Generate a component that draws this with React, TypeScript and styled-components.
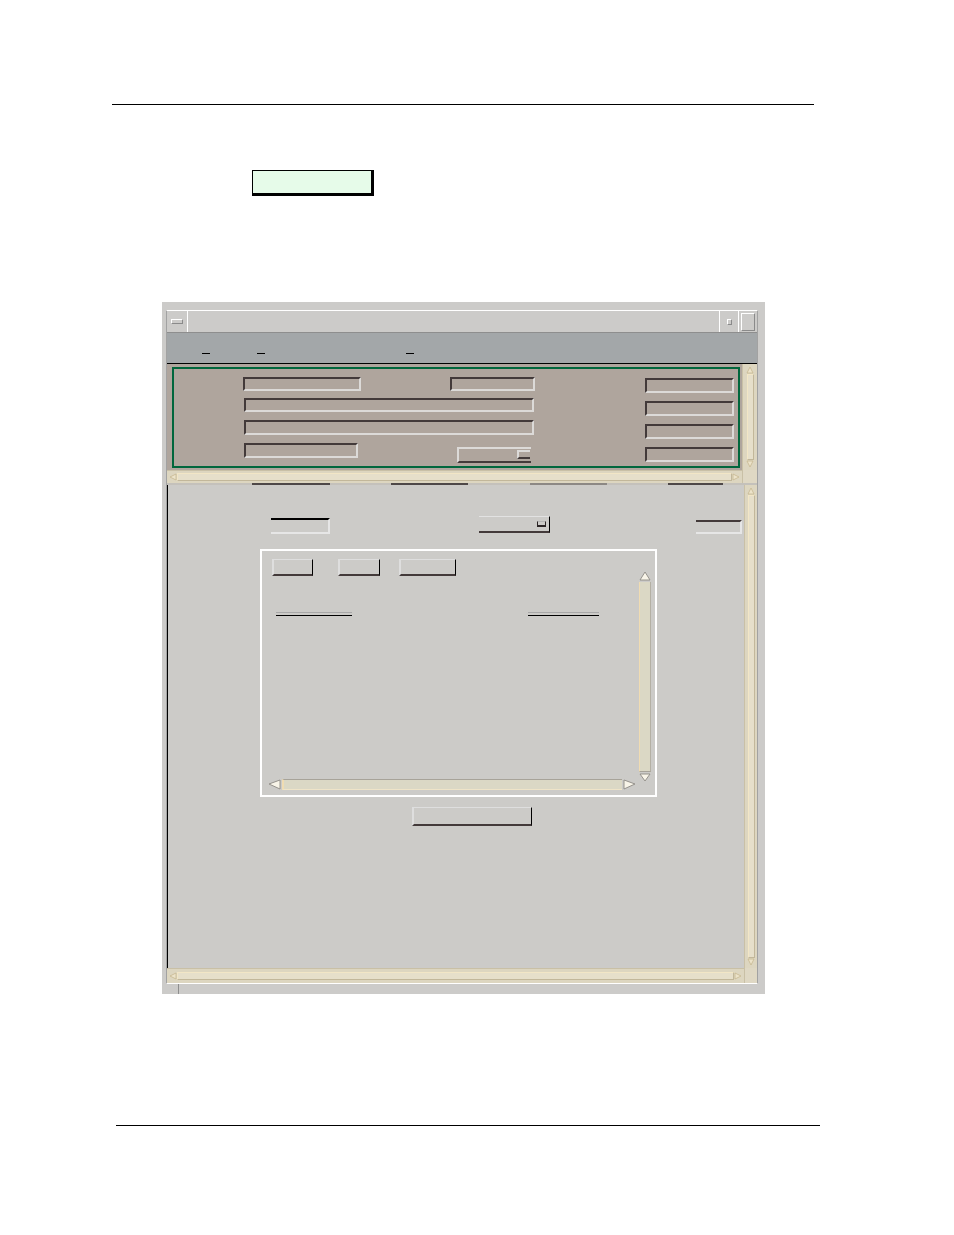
import React from 'react';
import styled, { createGlobalStyle } from 'styled-components';

const GlobalStyle = createGlobalStyle`
  html, body { margin: 0; padding: 0; background: #fff; }
  body { font-family: "Liberation Sans", Arial, sans-serif; }
  * { box-sizing: border-box; }
`;

const Page = styled.div`
  width: 954px;
  height: 1235px;
  background: #fff;
  display: flex;
  flex-direction: column;
  overflow: hidden;
`;

const Rule = styled.div<{ $top: number; $left: number; $width: number }>`
  flex-shrink: 0;
  margin-top: ${p => p.$top}px;
  margin-left: ${p => p.$left}px;
  width: ${p => p.$width}px;
  height: 1px;
  background: #000;
`;

const NoteBox = styled.div`
  flex-shrink: 0;
  margin-top: 65px;
  margin-left: 252px;
  width: 122px;
  height: 26px;
  background: #e6fbe9;
  border-top: 1px solid #000;
  border-left: 1px solid #000;
  border-right: 3px solid #000;
  border-bottom: 3px solid #000;
`;

/* ---------- window frame ---------- */

const Window = styled.div`
  flex-shrink: 0;
  margin-top: 106px;
  margin-left: 162px;
  width: 603px;
  height: 692px;
  background: #cccbc9;
  padding: 8px 7px 10px 4px;
  display: flex;
  flex-direction: column;
`;

const Shell = styled.div`
  flex: 1;
  display: flex;
  flex-direction: column;
  border-top: 1px solid #fff;
  border-left: 1px solid #a2a2a2;
  border-right: 1px solid #a2a2a2;
  border-bottom: 1px solid #fff;
`;

const FrameFoot = styled.div`
  height: 10px;
  margin-bottom: -10px;
  margin-left: 12px;
  width: 1px;
  background: #8e8e8e;
`;

const TitleBar = styled.div`
  height: 22px;
  display: flex;
  border-bottom: 1px solid #8e8e8e;
  background: #cccbc9;
`;

const TitleCell = styled.div<{ $w: number; $side: 'left' | 'right' }>`
  width: ${p => p.$w}px;
  display: flex;
  align-items: center;
  justify-content: center;
  ${p => (p.$side === 'left' ? 'border-right: 1px solid #fff;' : 'border-left: 1px solid #fff;')}
`;

const TitleSpacer = styled.div`
  flex: 1;
`;

const MinGlyph = styled.div`
  width: 12px;
  height: 5px;
  border-top: 1px solid #fff;
  border-left: 1px solid #fff;
  border-right: 1px solid #8a8a8a;
  border-bottom: 1px solid #8a8a8a;
`;

const IconGlyph = styled.div`
  width: 5px;
  height: 6px;
  margin-left: 1px;
  border: 1px solid #fff;
  border-right-color: #8a8a8a;
  border-bottom-color: #8a8a8a;
`;

const MaxGlyph = styled.div`
  width: 14px;
  height: 18px;
  border-top: 1px solid #fff;
  border-left: 1px solid #fff;
  border-right: 1px solid #8a8a8a;
  border-bottom: 1px solid #8a8a8a;
`;

const MenuBar = styled.div`
  height: 31px;
  background: #a3a7a9;
  border-bottom: 1px solid #000;
  display: flex;
  align-items: flex-start;
  padding-top: 20px;
`;

const Mnemonic = styled.span<{ $left: number }>`
  margin-left: ${p => p.$left}px;
  width: 8px;
  height: 1px;
  background: #000;
`;

/* ---------- scrollbars (motif beige) ---------- */

const VScroll = styled.div<{ $w: number }>`
  flex: 1;
  width: ${p => p.$w}px;
  display: flex;
  flex-direction: column;
  align-items: center;
  background: #ddd6c0;
  border-left: 1px solid #c9c0a6;
  padding: 2px 2px;
`;

const HScroll = styled.div<{ $h: number }>`
  height: ${p => p.$h}px;
  display: flex;
  align-items: center;
  background: #ddd6c0;
  border-top: 1px solid #c9c0a6;
  padding: 2px 2px;
`;

const TroughV = styled.div`
  flex: 1;
  width: 7px;
  background: #e6dfca;
  border: 1px solid #f2e6c6;
  border-right-color: #c2b79a;
  border-bottom-color: #c2b79a;
`;

const TroughH = styled.div`
  flex: 1;
  height: 8px;
  background: #e6dfca;
  border: 1px solid #f2e6c6;
  border-right-color: #c2b79a;
  border-bottom-color: #c2b79a;
`;

const Corner = styled.div<{ $h: number }>`
  height: ${p => p.$h}px;
  background: #dfd8c4;
  border-left: 1px solid #c9c0a6;
`;

type Dir = 'up' | 'down' | 'left' | 'right';

const triangle: Record<Dir, string> = {
  up: '4,1 7,7 1,7',
  down: '1,1 7,1 4,7',
  left: '1,4 7,1 7,7',
  right: '1,1 7,4 1,7',
};

const FadedArrow = ({ dir }: { dir: Dir }) => (
  <svg width="8" height="8" viewBox="0 0 8 8" style={{ flexShrink: 0 }}>
    <polygon points={triangle[dir]} fill="#ece3ca" stroke="#c6b890" strokeWidth="0.8" />
  </svg>
);

/* ---------- top (brown) panel ---------- */

const TopPanel = styled.div`
  height: 119px;
  display: flex;
`;

const PanelMain = styled.div`
  flex: 1;
  display: flex;
  flex-direction: column;
`;

const PanelSide = styled.div<{ $w: number }>`
  width: ${p => p.$w}px;
  display: flex;
  flex-direction: column;
`;

const BrownArea = styled.div`
  height: 106px;
  background: #afa59d;
  padding: 3px 2px 2px 5px;
  display: flex;
`;

const GreenFrame = styled.div`
  flex: 1;
  border: 2px solid #00663c;
  display: flex;
  padding: 8px 4px 0 69px;
`;

const FieldColumn = styled.div<{ $gap: number; $top?: number }>`
  display: flex;
  flex-direction: column;
  gap: ${p => p.$gap}px;
  padding-top: ${p => p.$top ?? 0}px;
`;

const FieldRow = styled.div`
  display: flex;
  align-items: flex-start;
`;

const Sunken = styled.div<{ $w: number; $h: number; $left?: number; $top?: number }>`
  width: ${p => p.$w}px;
  height: ${p => p.$h}px;
  margin-left: ${p => p.$left ?? 0}px;
  margin-top: ${p => p.$top ?? 0}px;
  border-top: 2px solid #433a3a;
  border-left: 2px solid #433a3a;
  border-right: 2px solid #dcdad8;
  border-bottom: 2px solid #dcdad8;
`;

const RightFields = styled(FieldColumn)`
  margin-left: auto;
`;

const DropButton = styled.div`
  width: 74px;
  height: 16px;
  margin-left: 99px;
  margin-top: 5px;
  border-top: 2px solid #dcdad8;
  border-left: 2px solid #dcdad8;
  border-bottom: 2px solid #433a3a;
  display: flex;
  justify-content: flex-end;
  align-items: flex-start;
  padding: 1px 1px 0 0;
`;

const DropMark = styled.div`
  width: 13px;
  height: 9px;
  border-top: 2px solid #dcdad8;
  border-left: 2px solid #dcdad8;
  border-bottom: 2px solid #433a3a;
`;

const Divider = styled.div`
  height: 2px;
  display: flex;
  background: #c4c1bb;
`;

const DividerSeg = styled.div<{ $left: number; $w: number; $c: string }>`
  margin-left: ${p => p.$left}px;
  width: ${p => p.$w}px;
  background: ${p => p.$c};
`;

/* ---------- lower (gray) panel ---------- */

const LowerPanel = styled.div`
  flex: 1;
  display: flex;
  background: #cccbc8;
`;

const LowerContent = styled.div`
  flex: 1;
  border-left: 1px solid #000;
  display: flex;
  flex-direction: column;
  align-items: flex-start;
  padding-top: 31px;
`;

const ControlRow = styled.div`
  display: flex;
  align-items: flex-start;
  height: 18px;
`;

const TextField = styled.div<{ $w: number; $h: number; $left: number; $top: number; $dark: string }>`
  width: ${p => p.$w}px;
  height: ${p => p.$h}px;
  margin-left: ${p => p.$left}px;
  margin-top: ${p => p.$top}px;
  border-top: 2px solid ${p => p.$dark};
  border-right: 2px solid #e6e6e6;
  border-bottom: 2px solid #e6e6e6;
`;

const Combo = styled.div`
  width: 71px;
  height: 17px;
  margin-left: 149px;
  border-top: 1px solid #e2e2e2;
  border-right: 1px solid #000;
  border-bottom: 2px solid #433a3a;
  display: flex;
  justify-content: flex-end;
  align-items: center;
  padding-right: 3px;
`;

const ComboMark = styled.div`
  width: 9px;
  height: 6px;
  border: 1px solid #2a2424;
  border-top-color: #b4b4b4;
  border-bottom-width: 2px;
`;

const GroupBox = styled.div`
  margin-top: 15px;
  margin-left: 92px;
  width: 397px;
  height: 248px;
  border: 2px solid #fff;
  display: flex;
`;

const GroupMain = styled.div`
  width: 377px;
  display: flex;
  flex-direction: column;
  padding: 8px 0 5px 6px;
`;

const ButtonRow = styled.div`
  display: flex;
  margin-left: 4px;
`;

const RaisedButton = styled.div<{ $w: number; $h: number; $left?: number }>`
  width: ${p => p.$w}px;
  height: ${p => p.$h}px;
  margin-left: ${p => p.$left ?? 0}px;
  border-top: 1px solid #dedede;
  border-left: 2px solid #dedede;
  border-right: 1px solid #000;
  border-bottom: 2px solid #433a3a;
  flex-shrink: 0;
`;

const HeaderRow = styled.div`
  display: flex;
  margin-top: 36px;
  margin-left: 8px;
`;

const HeaderLine = styled.div<{ $w: number; $left?: number }>`
  width: ${p => p.$w}px;
  height: 4px;
  margin-left: ${p => p.$left ?? 0}px;
  border-top: 1px solid #a8a8a8;
  border-bottom: 1px solid #000;
`;

const ListHScroll = styled.div`
  margin-top: auto;
  width: 368px;
  height: 11px;
  display: flex;
`;

const ListHTrough = styled.div`
  flex: 1;
  background: #dbd8c5;
  border-top: 1px solid #a7a399;
  border-left: 2px solid #f0dcb2;
  border-bottom: 1px solid #efe4c8;
  margin: 0 1px;
`;

const ListVScroll = styled.div`
  width: 12px;
  margin-top: 20px;
  height: 212px;
  display: flex;
  flex-direction: column;
`;

const ListVTrough = styled.div`
  flex: 1;
  background: #dbd8c5;
  border-left: 1px solid #f0dcb2;
  border-right: 1px solid #b4b0a4;
  border-bottom: 1px solid #a7a399;
  margin: 1px 0;
`;

const listTriangle: Record<Dir, string> = {
  up: '6,1 11,9 1,9',
  down: '1,1 11,1 6,8',
  left: '1,5 12,1 12,10',
  right: '1,1 12,5 1,10',
};

const ListArrow = ({ dir }: { dir: Dir }) => {
  const vertical = dir === 'up' || dir === 'down';
  const w = vertical ? 12 : 13;
  const h = vertical ? 10 : 11;
  return (
    <svg width={w} height={h} viewBox={`0 0 ${w} ${h}`} style={{ flexShrink: 0, display: 'block' }}>
      <polygon points={listTriangle[dir]} fill="#f8f4e8" stroke="#8d8a84" strokeWidth="0.9" />
    </svg>
  );
};

const BottomButton = styled(RaisedButton)`
  margin-top: 10px;
`;

export default function App() {
  return (
    <Page>
      <GlobalStyle />
      <Rule $top={104} $left={112} $width={702} />
      <NoteBox />

      <Window>
        <Shell>
          <TitleBar>
            <TitleCell $w={21} $side="left">
              <MinGlyph />
            </TitleCell>
            <TitleSpacer />
            <TitleCell $w={19} $side="right">
              <IconGlyph />
            </TitleCell>
            <TitleCell $w={19} $side="right">
              <MaxGlyph />
            </TitleCell>
          </TitleBar>

          <MenuBar>
            <Mnemonic $left={35} />
            <Mnemonic $left={47} />
            <Mnemonic $left={141} />
          </MenuBar>

          <TopPanel>
            <PanelMain>
              <BrownArea>
                <GreenFrame>
                  <FieldColumn $gap={7}>
                    <FieldRow>
                      <Sunken $w={118} $h={14} />
                      <Sunken $w={85} $h={14} $left={89} />
                    </FieldRow>
                    <FieldRow>
                      <Sunken $w={290} $h={14} $left={1} />
                    </FieldRow>
                    <FieldRow>
                      <Sunken $w={290} $h={15} $left={1} $top={1} />
                    </FieldRow>
                    <FieldRow>
                      <Sunken $w={114} $h={15} $left={1} $top={1} />
                      <DropButton>
                        <DropMark />
                      </DropButton>
                    </FieldRow>
                  </FieldColumn>
                  <RightFields $gap={8} $top={1}>
                    <Sunken $w={89} $h={15} />
                    <Sunken $w={89} $h={15} />
                    <Sunken $w={89} $h={15} />
                    <Sunken $w={89} $h={15} />
                  </RightFields>
                </GreenFrame>
              </BrownArea>
              <HScroll $h={13}>
                <FadedArrow dir="left" />
                <TroughH />
                <FadedArrow dir="right" />
              </HScroll>
            </PanelMain>
            <PanelSide $w={15}>
              <VScroll $w={15}>
                <FadedArrow dir="up" />
                <TroughV />
                <FadedArrow dir="down" />
              </VScroll>
              <Corner $h={13} />
            </PanelSide>
          </TopPanel>

          <Divider>
            <DividerSeg $left={85} $w={78} $c="#4e4848" />
            <DividerSeg $left={61} $w={77} $c="#4e4848" />
            <DividerSeg $left={62} $w={77} $c="#8c8884" />
            <DividerSeg $left={61} $w={55} $c="#4e4848" />
          </Divider>

          <LowerPanel>
            <PanelMain>
              <LowerContent>
                <ControlRow>
                  <TextField $w={59} $h={16} $left={103} $top={2} $dark="#000" />
                  <Combo>
                    <ComboMark />
                  </Combo>
                  <TextField $w={46} $h={14} $left={146} $top={4} $dark="#433a3a" />
                </ControlRow>

                <GroupBox>
                  <GroupMain>
                    <ButtonRow>
                      <RaisedButton $w={41} $h={17} />
                      <RaisedButton $w={42} $h={17} $left={25} />
                      <RaisedButton $w={57} $h={17} $left={19} />
                    </ButtonRow>
                    <HeaderRow>
                      <HeaderLine $w={76} />
                      <HeaderLine $w={71} $left={176} />
                    </HeaderRow>
                    <ListHScroll>
                      <ListArrow dir="left" />
                      <ListHTrough />
                      <ListArrow dir="right" />
                    </ListHScroll>
                  </GroupMain>
                  <ListVScroll>
                    <ListArrow dir="up" />
                    <ListVTrough />
                    <ListArrow dir="down" />
                  </ListVScroll>
                </GroupBox>

                <BottomButton $w={120} $h={19} $left={244} />
              </LowerContent>
              <HScroll $h={15}>
                <FadedArrow dir="left" />
                <TroughH />
                <FadedArrow dir="right" />
              </HScroll>
            </PanelMain>
            <PanelSide $w={13}>
              <VScroll $w={13}>
                <FadedArrow dir="up" />
                <TroughV />
                <FadedArrow dir="down" />
              </VScroll>
              <Corner $h={15} />
            </PanelSide>
          </LowerPanel>
        </Shell>
        <FrameFoot />
      </Window>

      <Rule $top={131} $left={116} $width={704} />
    </Page>
  );
}
